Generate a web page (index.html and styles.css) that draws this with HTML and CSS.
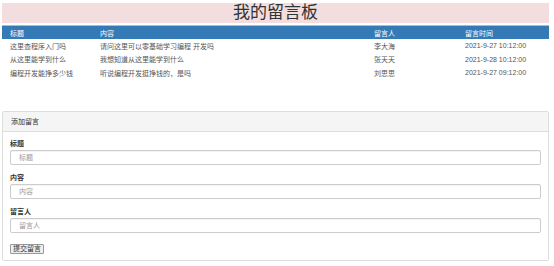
FILE: index.html
```html
<!DOCTYPE html>
<html lang="zh">
<head>
  <meta charset="UTF-8">
  <title>我的留言板</title>
  <link rel="stylesheet" href="styles.css">
</head>
<body>
  <div class="page">
    <h1 class="title">我的留言板</h1>

    <table class="msg-table">
      <thead>
        <tr>
          <th class="c-title">标题</th>
          <th class="c-content">内容</th>
          <th class="c-user">留言人</th>
          <th class="c-time">留言时间</th>
        </tr>
      </thead>
      <tbody>
        <tr>
          <td>这里查程序入门吗</td>
          <td>请问这里可以零基础学习编程 开发吗</td>
          <td>李大海</td>
          <td>2021-9-27 10:12:00</td>
        </tr>
        <tr>
          <td>从这里能学到什么</td>
          <td>我想知道从这里能学到什么</td>
          <td>张天天</td>
          <td>2021-9-28 10:12:00</td>
        </tr>
        <tr>
          <td>编程开发能挣多少钱</td>
          <td>听说编程开发挺挣钱的，是吗</td>
          <td>刘思思</td>
          <td>2021-9-27 09:12:00</td>
        </tr>
      </tbody>
    </table>

    <div class="panel">
      <div class="panel-heading">添加留言</div>
      <form class="panel-body">
        <label for="title">标题</label>
        <input type="text" id="title" placeholder="标题">

        <label for="content">内容</label>
        <input type="text" id="content" placeholder="内容">

        <label for="user">留言人</label>
        <input type="text" id="user" placeholder="留言人">

        <button type="button" class="submit">提交留言</button>
      </form>
    </div>
  </div>
</body>
</html>
```

FILE: styles.css
```css
body {
  margin: 0;
  padding: 0;
  background-color: #fff;
  color: #333;
  font-family: "Liberation Sans", "Noto Sans CJK SC", sans-serif;
  font-size: 7px;
}

.page {
  padding: 3px 5px 0 2px;
}

.title {
  margin: 0;
  height: 20px;
  line-height: 20px;
  background-color: #f2dede;
  text-align: center;
  font-size: 17px;
  font-weight: normal;
  color: #333;
}

.msg-table {
  width: 100%;
  margin-top: 2px;
  border-collapse: collapse;
  table-layout: fixed;
}

.msg-table th {
  height: 13px;
  padding: 0 0 0 8px;
  background-color: #337ab7;
  border-top: 1px solid #9fc0dd;
  color: #fff;
  font-weight: normal;
  text-align: left;
  white-space: nowrap;
}

.msg-table td {
  height: 13.5px;
  padding: 0 0 0 8px;
  color: #555;
  white-space: nowrap;
}

.c-title { width: 82px; }
.c-content { width: 266px; }
.c-user { width: 83px; }

.panel {
  margin-top: 31px;
  border: 1px solid #ddd;
  border-radius: 2px;
}

.panel-heading {
  height: 19px;
  line-height: 19px;
  padding-left: 8px;
  background-color: #f5f5f5;
  border-bottom: 1px solid #ddd;
  color: #333;
}

.panel-body {
  padding: 6px 7px 6px 7px;
}

.panel-body label {
  display: block;
  height: 11px;
  line-height: 11px;
  font-weight: bold;
  margin-bottom: 1px;
}

.panel-body input {
  display: block;
  box-sizing: border-box;
  width: 100%;
  height: 15px;
  margin: 0 0 7px 0;
  padding: 0 8px;
  border: 1px solid #ccc;
  border-radius: 2px;
  font-family: inherit;
  font-size: 7px;
  color: #555;
  box-shadow: inset 0 1px 1px rgba(0, 0, 0, 0.05);
}

.panel-body input::placeholder {
  color: #999;
}

.submit {
  display: block;
  height: 10px;
  padding: 0 2px;
  margin-top: 11px;
  border: 1px solid #999;
  border-radius: 1px;
  background-color: #efefef;
  font-family: inherit;
  font-size: 7px;
  line-height: 8px;
  color: #333;
}
```
